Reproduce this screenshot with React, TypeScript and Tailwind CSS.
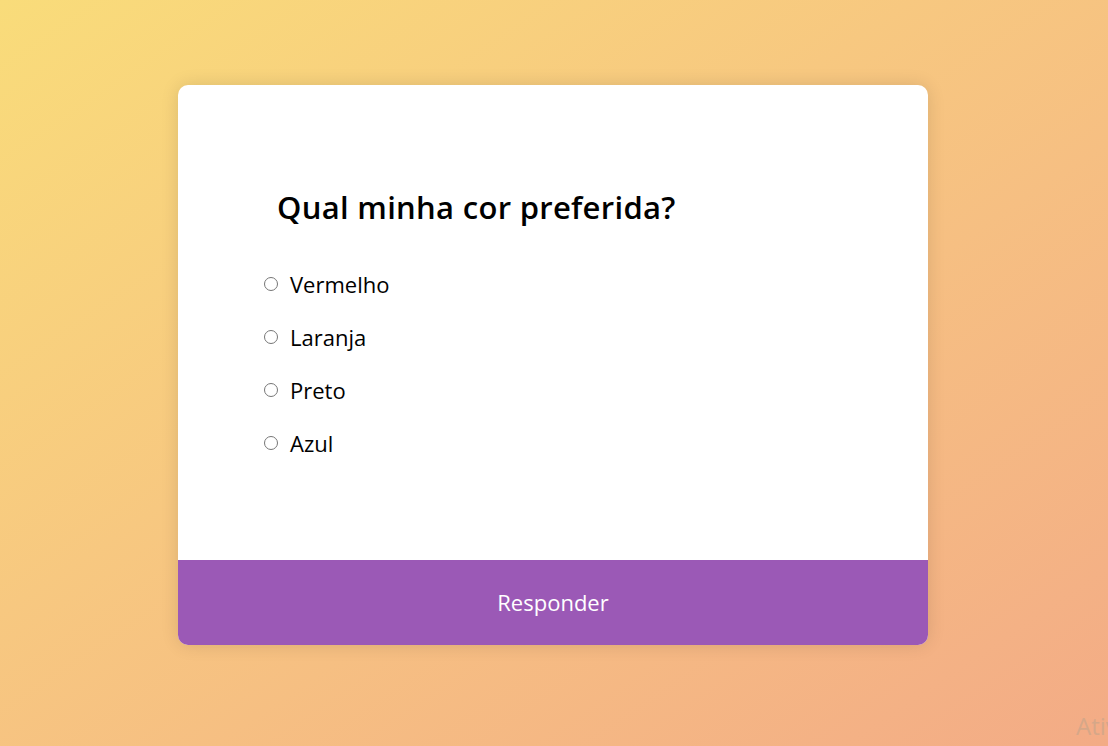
import React, { useState } from 'react';

const options = ['Vermelho', 'Laranja', 'Preto', 'Azul'];

export default function App() {
  const [selected, setSelected] = useState<string | null>(null);

  return (
    <div
      className="relative h-[746px] w-full overflow-hidden bg-gradient-to-br from-[#f9dc7a] to-[#f3ab86] pt-[85px]"
      style={{ fontFamily: '"Open Sans", "Liberation Sans", sans-serif' }}
    >
      <div className="ml-[178px] flex h-[560px] w-[750px] flex-col overflow-hidden rounded-[10px] bg-white shadow-[0_0_18px_rgba(0,0,0,0.12)]">
        {/* Question */}
        <div className="flex-1 px-[86px] pt-[99px]">
          <h2 className="ml-[13px] text-[31px] font-semibold leading-[46px] tracking-[0.3px] text-black">
            Qual minha cor preferida?
          </h2>

          <ul className="mt-[37px] flex flex-col gap-[19px]">
            {options.map((opt) => (
              <li key={opt}>
                <label className="flex h-[34px] cursor-pointer items-center gap-[12px] text-[22px] text-black">
                  <input
                    type="radio"
                    name="cor"
                    checked={selected === opt}
                    onChange={() => setSelected(opt)}
                    className="m-0 h-[14px] w-[14px]"
                  />
                  {opt}
                </label>
              </li>
            ))}
          </ul>
        </div>

        {/* Action */}
        <button className="h-[85px] w-full bg-[#9b59b6] text-[22px] text-white">
          Responder
        </button>
      </div>

      <div className="absolute left-[1076px] top-[708px] whitespace-nowrap text-[24px] text-[#c9a58a]/70">
        Ativar o Windows
      </div>
    </div>
  );
}
